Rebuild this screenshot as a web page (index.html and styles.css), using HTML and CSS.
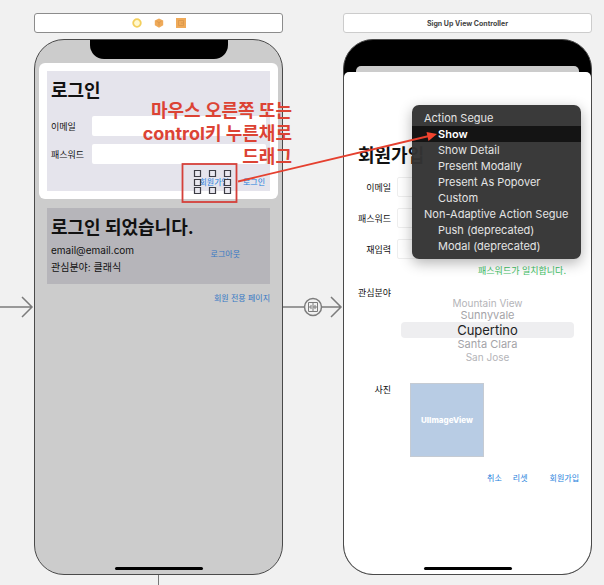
FILE: index.html
```html
<!DOCTYPE html>
<html lang="ko">
<head>
<meta charset="utf-8">
<title>Storyboard</title>
<link rel="stylesheet" href="styles.css">
</head>
<body>
<main class="canvas">
  <svg class="wire" width="34" height="24" viewBox="0 0 34 24" aria-hidden="true">
    <path d="M0 12H32M22 2L32 12L22 22"/>
  </svg>

  <section class="scene">
    <header class="dock">
      <svg width="10" height="10" viewBox="0 0 10 10"><circle cx="5" cy="5" r="3.8" fill="#fff8cf" stroke="#f3cf5d" stroke-width="1.8"/></svg>
      <svg width="10" height="10" viewBox="0 0 10 10"><path d="M5 .4L9.2 2.6V7.3L5 9.7L.8 7.3V2.6Z" fill="#efaa59"/><path d="M2.6 3.3L5 4.6L7.4 3.3M5 4.6V7.6" fill="none" stroke="#d8954a" stroke-width=".8"/></svg>
      <svg width="10" height="10" viewBox="0 0 10 10"><path d="M0 0H10V10H0Z" fill="#efaa59"/><path d="M2.5 2.5H7.5V7.5H2.5ZM5 5H7.5" fill="none" stroke="#d8954a" stroke-width=".8"/></svg>
    </header>
    <div class="phone phone-home">
      <div class="notch"></div>
      <div class="sheet">
        <form class="panel login">
          <h1>로그인</h1>
          <div class="field"><label for="mail">이메일</label><input id="mail" type="email"></div>
          <div class="field"><label for="pass">패스워드</label><input id="pass" type="password"></div>
          <div class="actions"><button type="button">회원가입</button><button type="button">로그인</button></div>
        </form>
      </div>
      <div class="panel member">
        <h1>로그인 되었습니다.</h1>
        <div class="member-row">
          <div class="info"><p>email@email.com</p><p>관심분야: 클래식</p></div>
          <button type="button">로그아웃</button>
        </div>
      </div>
      <button class="members-only" type="button">회원 전용 페이지</button>
      <div class="home-bar"></div>
    </div>
    <div class="stem"></div>
  </section>

  <svg class="wire" width="60" height="24" viewBox="0 0 60 24" aria-hidden="true">
    <path d="M0 12H21M39 12H58M48 2L58 12L48 22"/>
    <circle cx="30" cy="12" r="8.5"/>
    <path class="thin" d="M25.5 7.5H34.5V16.5H25.5ZM30 7.5V16.5M25.5 12H28M30 12H34.5M28 10V14M32 10V14"/>
  </svg>

  <section class="scene">
    <header class="dock dock-plain">Sign Up View Controller</header>
    <div class="phone phone-signup">
      <div class="behind"></div>
      <form class="signup">
        <h1>회원가입</h1>
        <div class="field"><label for="s-mail">이메일</label><input id="s-mail" type="email"></div>
        <div class="field"><label for="s-pass">패스워드</label><input id="s-pass" type="password"></div>
        <div class="field"><label for="s-again">재입력</label><input id="s-again" type="password"></div>
        <p class="match">패스워드가 일치합니다.</p>
        <div class="interest">
          <span class="caption" id="interest">관심분야</span>
          <ul class="wheel" role="listbox" aria-labelledby="interest">
            <li class="far" role="option">Mountain View</li>
            <li role="option">Sunnyvale</li>
            <li class="chosen" role="option" aria-selected="true">Cupertino</li>
            <li role="option">Santa Clara</li>
            <li class="far" role="option">San Jose</li>
          </ul>
        </div>
        <div class="photo"><span class="caption">사진</span><div class="image-view">UIImageView</div></div>
        <div class="actions"><button type="button">취소</button><button type="button">리셋</button><button class="submit" type="button">회원가입</button></div>
      </form>
      <div class="home-bar"></div>
    </div>
    <div class="menu" role="menu">
      <div class="menu-title">Action Segue</div>
      <button class="active" role="menuitem" type="button">Show</button>
      <button role="menuitem" type="button">Show Detail</button>
      <button role="menuitem" type="button">Present Modally</button>
      <button role="menuitem" type="button">Present As Popover</button>
      <button role="menuitem" type="button">Custom</button>
      <div class="menu-title">Non-Adaptive Action Segue</div>
      <button role="menuitem" type="button">Push (deprecated)</button>
      <button role="menuitem" type="button">Modal (deprecated)</button>
    </div>
  </section>

  <p class="note">마우스 오른쪽 또는<br>control키 누른채로<br>드래그</p>
  <svg class="marks" width="604" height="585" viewBox="0 0 604 585" aria-hidden="true">
    <g fill="#e9e8f0" stroke="#3c3c44" stroke-width="1.2">
      <path d="M194.5 170.5h6v6h-6zM209.5 170.5h6v6h-6zM224.5 170.5h6v6h-6zM194.5 179.5h6v6h-6zM224.5 179.5h6v6h-6zM194.5 187.5h6v6h-6zM209.5 187.5h6v6h-6zM224.5 187.5h6v6h-6z"/>
    </g>
    <rect x="182.5" y="164" width="54" height="38" fill="none" stroke="#d5403a" stroke-width="1.8"/>
    <path d="M238 181.5L429 136" stroke="#e5402f" stroke-width="1.8"/>
    <path d="M437 134L426.5 132L428.5 141Z" fill="#f04430"/>
  </svg>
</main>
</body>
</html>
```
FILE: styles.css
```css
* { box-sizing: border-box; }

body {
  margin: 0;
  background: #f1f1f1;
  color: #111;
  font-family: Inter, "Noto Sans CJK KR", sans-serif;
  font-size: 9px;
}

h1, p, ul { margin: 0; padding: 0; }

h1 {
  font-size: 18px;
  line-height: 24px;
  font-weight: 700;
}

button {
  border: 0;
  padding: 0;
  background: none;
  color: #2480dc;
  font: inherit;
  font-size: 8px;
  line-height: 12px;
}

input {
  border: 0;
  border-radius: 2px;
  background: #fff;
  min-width: 0;
  height: 20px;
  flex: 1;
}

.canvas {
  position: relative;
  display: grid;
  grid-template-columns: 34px minmax(0, 1fr) 60px minmax(0, 1fr) 12px;
  min-height: 100vh;
  padding-top: 13px;
}

.wire {
  margin-top: 282px;
  fill: none;
  stroke: #7c7c7c;
  stroke-width: 1.5;
}

.wire .thin { stroke-width: 1; }

.scene {
  position: relative;
  display: flex;
  flex-direction: column;
}

.dock {
  display: flex;
  align-items: center;
  justify-content: center;
  gap: 12px;
  height: 20px;
  margin-bottom: 6px;
  background: #fff;
  border: 1px solid #8c8c8c;
  border-radius: 3px;
}

.dock-plain {
  border-color: #ccc;
  color: #444;
  font-size: 7px;
  font-weight: 700;
}

.phone {
  display: flex;
  flex-direction: column;
  flex: 1;
  border: 1px solid #4a4a4a;
  border-radius: 30px;
  overflow: hidden;
}

.phone-home { background: #ccc; }

.phone-signup {
  position: relative;
  margin-bottom: 10px;
  background: #000;
}

.notch {
  width: 138px;
  height: 19px;
  margin: 0 auto 4px;
  background: #000;
  border-radius: 0 0 14px 14px;
}

.home-bar {
  width: 88px;
  height: 3px;
  margin: auto auto 4px;
  border-radius: 2px;
  background: #000;
}

.phone-signup .home-bar {
  position: absolute;
  right: 0;
  bottom: 4px;
  left: 0;
  margin: 0 auto;
}

.stem {
  width: 1px;
  height: 10px;
  margin: 0 auto;
  background: #777;
}

.sheet {
  margin: 0 4px 9px;
  padding: 8px;
  background: #fff;
  border-radius: 6px;
}

.panel { padding: 8px 4px; }

.login {
  background: #e5e4ec;
  padding-bottom: 3px;
}

.login h1 { margin-bottom: 13px; }

.field {
  display: flex;
  align-items: center;
}

.login .field { margin-bottom: 8px; }

.login label { width: 41px; }

.login .actions {
  display: flex;
  justify-content: flex-end;
  gap: 14px;
  padding: 4px 1px 0 0;
}

.member {
  margin: 0 12px;
  background: #b6b5ba;
}

.member-row {
  display: flex;
  align-items: flex-start;
  justify-content: space-between;
  padding-right: 26px;
}

.member-row button { margin-top: 8px; }

.info {
  padding-top: 2px;
  font-size: 10px;
  line-height: 17px;
}

.members-only {
  align-self: flex-end;
  margin: 8px 12px 0;
}

.member button, .members-only { color: #3678c4; }

.behind {
  height: 6px;
  margin: 26px 12px 0;
  background: #ccc;
  border-radius: 5px 5px 0 0;
}

.signup {
  flex: 1;
  padding: 72px 12px 0 14px;
  background: #fff;
  border-radius: 5px 5px 0 0;
}

.signup h1 { margin-bottom: 9px; }

.signup .field {
  gap: 6px;
  margin-bottom: 11px;
}

.signup .field:nth-of-type(3) { margin-bottom: 5px; }

.signup label {
  width: 33px;
  text-align: right;
  white-space: nowrap;
}

.signup input { border: 1px solid #eee; }

.match {
  padding-right: 13px;
  text-align: right;
  color: #42c266;
  font-size: 9px;
  line-height: 14px;
}

.interest, .photo {
  display: flex;
  align-items: flex-start;
}

.interest { padding-top: 8px; }

.caption {
  width: 33px;
  line-height: 13px;
  text-align: right;
  white-space: nowrap;
}

.wheel {
  flex: 1;
  margin: 11px 5px 0 10px;
  list-style: none;
  text-align: center;
  color: #a4a4a8;
  font-size: 11px;
  line-height: 13px;
}

.wheel .far {
  color: #b4b4b8;
  font-size: 10px;
  line-height: 12px;
}

.wheel .chosen {
  border-radius: 4px;
  background: #eeeef0;
  color: #222;
  font-size: 13px;
  line-height: 16px;
}

.photo { padding-top: 20px; }

.image-view {
  display: grid;
  place-items: center;
  width: 74px;
  height: 74px;
  margin-left: 19px;
  background: #b8cce4;
  border: 1px solid #c5cbd3;
  color: #fff;
  font-size: 8px;
  font-weight: 800;
}

.signup .actions {
  display: flex;
  justify-content: flex-end;
  gap: 11px;
  padding-top: 15px;
}

.submit { margin-left: 11px; }

.menu {
  position: absolute;
  top: 92px;
  right: 11px;
  width: 169px;
  padding: 5px 0;
  border-radius: 7px;
  background: rgba(52, 52, 52, 0.97);
  box-shadow: 0 4px 14px rgba(0, 0, 0, 0.3);
  color: #e4e4e4;
  font-size: 11px;
  line-height: 16px;
  white-space: nowrap;
}

.menu-title { padding-left: 12px; }

.menu button {
  display: block;
  width: 100%;
  padding-left: 26px;
  color: #e4e4e4;
  font-size: 11px;
  line-height: 16px;
  text-align: left;
}

.menu .active {
  background: #141414;
  color: #fff;
  font-weight: 600;
}

.note {
  position: absolute;
  top: 99px;
  left: 112px;
  width: 180px;
  color: #dc4334;
  font-size: 18px;
  font-weight: 700;
  line-height: 23px;
  text-align: right;
}

.marks {
  position: absolute;
  top: 0;
  left: 0;
  pointer-events: none;
}
```
